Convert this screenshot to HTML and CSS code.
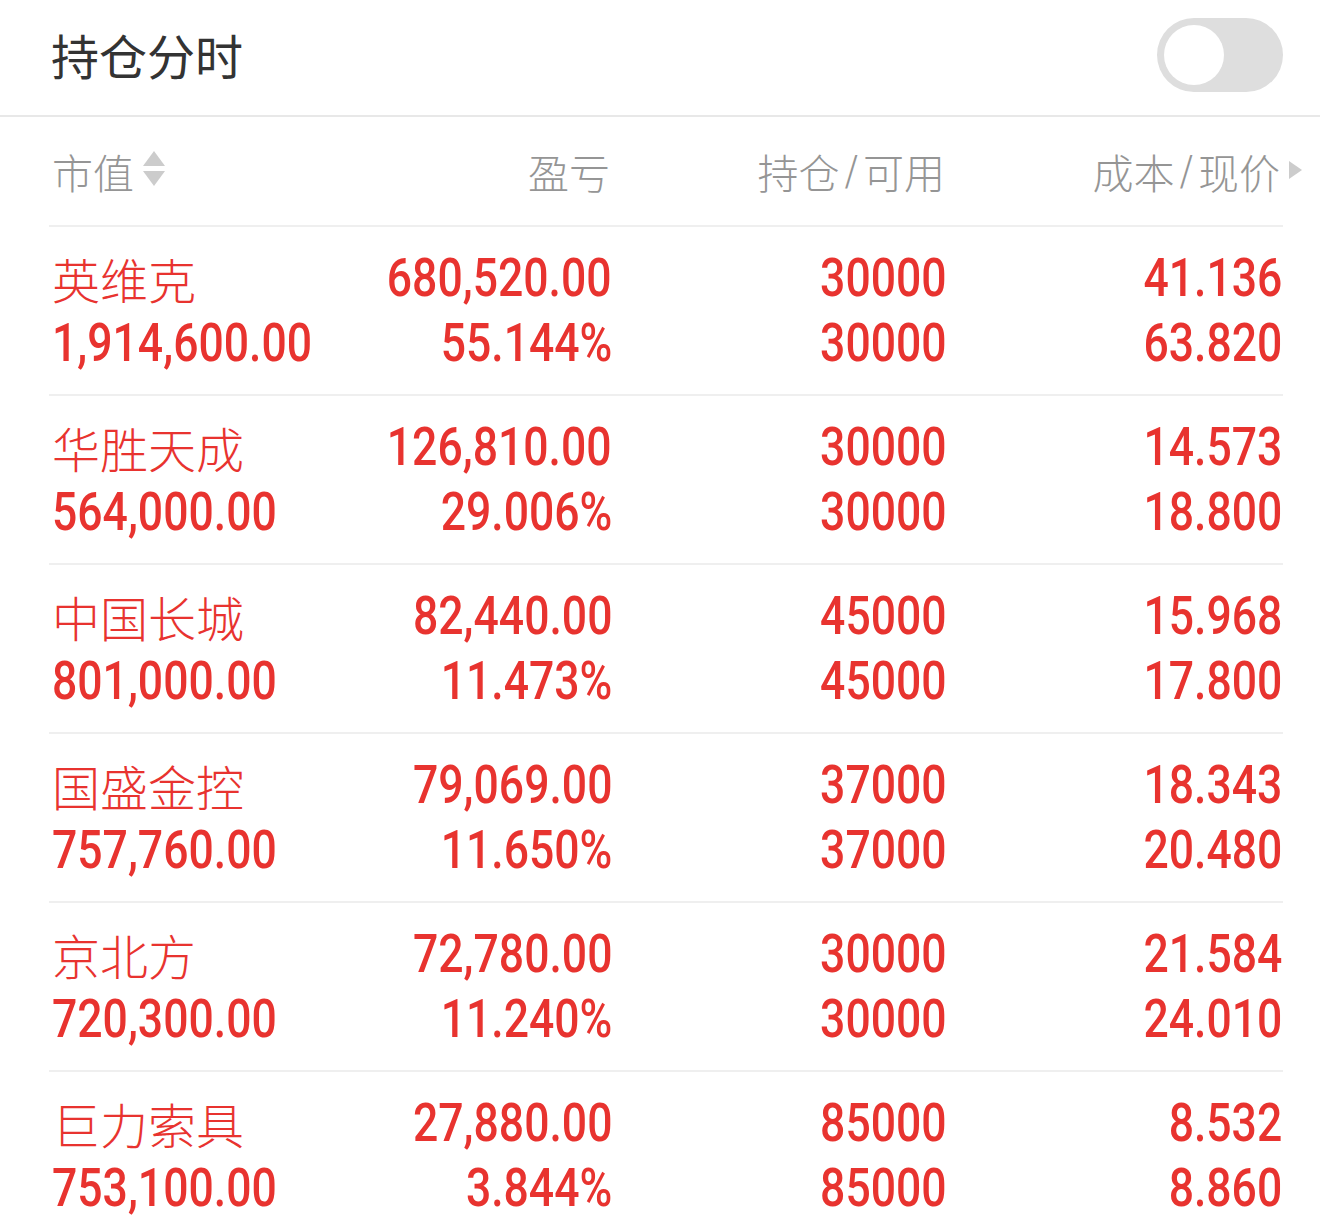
FILE: index.html
```html
<!DOCTYPE html>
<html lang="zh">
<head>
<meta charset="utf-8">
<link rel="stylesheet" href="styles.css">
</head>
<body>
<div class="page">
  <header class="topbar">
    <h1 class="title">持仓分时</h1>
    <div class="toggle"><span class="knob"></span></div>
  </header>
  <div class="table">
    <div class="row head">
      <div class="cell left">市值<span class="sort"><i class="up"></i><i class="down"></i></span></div>
      <div class="cell">盈亏</div>
      <div class="cell">持仓<span class="sl">/</span>可用</div>
      <div class="cell">成本<span class="sl">/</span>现价<i class="arrow"></i></div>
    </div>
    <div class="row item">
      <div class="cell left"><span class="name">英维克</span><span class="num">1,914,600.00</span></div>
      <div class="cell"><span class="num">680,520.00</span><span class="num">55.144%</span></div>
      <div class="cell"><span class="num">30000</span><span class="num">30000</span></div>
      <div class="cell"><span class="num">41.136</span><span class="num">63.820</span></div>
    </div>
    <div class="row item">
      <div class="cell left"><span class="name">华胜天成</span><span class="num">564,000.00</span></div>
      <div class="cell"><span class="num">126,810.00</span><span class="num">29.006%</span></div>
      <div class="cell"><span class="num">30000</span><span class="num">30000</span></div>
      <div class="cell"><span class="num">14.573</span><span class="num">18.800</span></div>
    </div>
    <div class="row item">
      <div class="cell left"><span class="name">中国长城</span><span class="num">801,000.00</span></div>
      <div class="cell"><span class="num">82,440.00</span><span class="num">11.473%</span></div>
      <div class="cell"><span class="num">45000</span><span class="num">45000</span></div>
      <div class="cell"><span class="num">15.968</span><span class="num">17.800</span></div>
    </div>
    <div class="row item">
      <div class="cell left"><span class="name">国盛金控</span><span class="num">757,760.00</span></div>
      <div class="cell"><span class="num">79,069.00</span><span class="num">11.650%</span></div>
      <div class="cell"><span class="num">37000</span><span class="num">37000</span></div>
      <div class="cell"><span class="num">18.343</span><span class="num">20.480</span></div>
    </div>
    <div class="row item">
      <div class="cell left"><span class="name">京北方</span><span class="num">720,300.00</span></div>
      <div class="cell"><span class="num">72,780.00</span><span class="num">11.240%</span></div>
      <div class="cell"><span class="num">30000</span><span class="num">30000</span></div>
      <div class="cell"><span class="num">21.584</span><span class="num">24.010</span></div>
    </div>
    <div class="row item">
      <div class="cell left"><span class="name">巨力索具</span><span class="num">753,100.00</span></div>
      <div class="cell"><span class="num">27,880.00</span><span class="num">3.844%</span></div>
      <div class="cell"><span class="num">85000</span><span class="num">85000</span></div>
      <div class="cell"><span class="num">8.532</span><span class="num">8.860</span></div>
    </div>
  </div>
</div>
</body>
</html>
```
FILE: styles.css
```css
* { box-sizing: border-box; }
html, body { margin: 0; padding: 0; background: #fff; }
body { font-family: "Noto Sans CJK SC", "Noto Sans", sans-serif; width: 1320px; height: 1232px; overflow: hidden; }
.topbar {
  height: 117px;
  display: flex;
  align-items: center;
  justify-content: space-between;
  padding: 0 37px 0 51px;
  border-bottom: 2px solid #e8e8e8;
}
.title { margin: 0; font-size: 48px; font-weight: 400; color: #333; line-height: 1; position: relative; top: -4px; }
.toggle {
  width: 126px; height: 74px; border-radius: 37px; background: #dedede;
  display: flex; align-items: center; padding-left: 7px; position: relative; top: -3px;
}
.knob { width: 60px; height: 60px; border-radius: 50%; background: #fff; }
.table { margin: 0 37px 0 49px; }
.row {
  display: grid;
  grid-template-columns: 305px 258px 335px 335px;
  border-bottom: 2px solid #efefef;
}
.head { height: 110px; align-items: center; color: #959595; font-size: 41px; font-weight: 300; }
.head .cell:not(.left) { padding-right: 2px; }
.cell { text-align: right; display: flex; flex-direction: column; align-items: flex-end; }
.head .cell { flex-direction: row; justify-content: flex-end; align-items: center; }
.cell.left { align-items: flex-start; padding-left: 3px; }
.head .cell.left { justify-content: flex-start; }
.sl { margin: 0 5px; font-family: "DejaVu Sans", sans-serif; font-size: 40px; }
.sort { display: inline-flex; flex-direction: column; gap: 5px; margin-left: 9px; margin-top: 10px; }
.sort i { width: 0; height: 0; border-left: 11px solid transparent; border-right: 11px solid transparent; }
.sort .up { border-bottom: 15px solid #cccccc; }
.sort .down { border-top: 15px solid #cccccc; }
.arrow { width: 0; height: 0; border-top: 9px solid transparent; border-bottom: 9px solid transparent; border-left: 13px solid #cccccc; margin-left: 9px; margin-right: -22px; margin-bottom: 2px; }
.item { height: 169px; padding: 19px 0 20px; color: #e8332f; }
.item:last-child { border-bottom: none; }
.name, .num { display: block; height: 65px; line-height: 65px; white-space: nowrap; }
.name { font-size: 48px; font-weight: 300; }
.num { font-family: Roboto, "DejaVu Sans", sans-serif; font-size: 53px; font-weight: 500; transform: scaleX(0.84); transform-origin: right center; }
.left .num { transform-origin: left center; }
```
